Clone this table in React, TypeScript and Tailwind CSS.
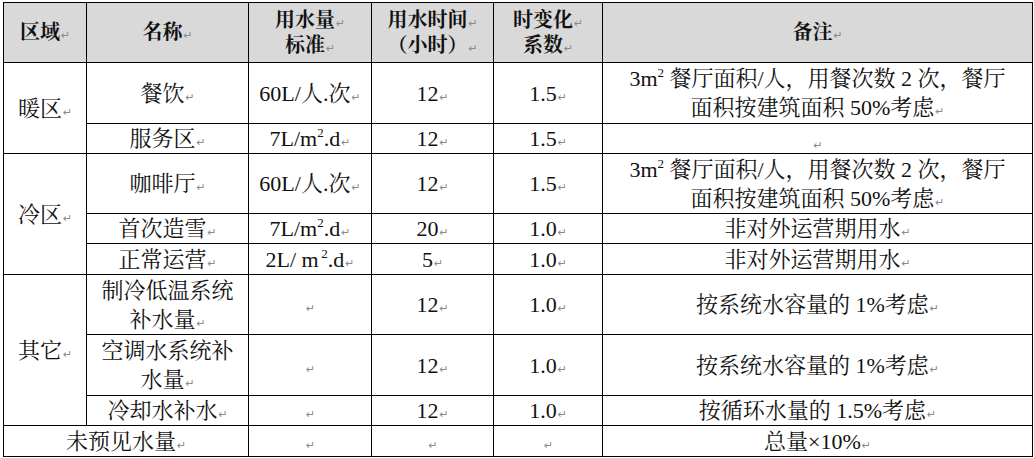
import React from "react";

const M = () => (
  <span className="font-['DejaVu_Sans',sans-serif] text-[11px] leading-none text-[#8a8a8a] font-normal align-baseline ml-[1px]">↵</span>
);

const Sup = ({ children }: { children: React.ReactNode }) => (
  <span className="text-[13px] leading-none relative -top-[9px]">{children}</span>
);

const td = "border border-black text-center align-middle px-[4px] py-0";
const th = "border border-black text-center align-middle px-[4px] py-0 bg-[#d9d9d9] font-bold text-[20px] leading-[25px]";

export default function App() {
  return (
    <div className="w-[1034px] h-[458px] bg-white pl-[3px] pt-[2px] text-[#111] font-['Liberation_Serif','Noto_Serif_CJK_SC','Noto_Sans_CJK_SC',serif] text-[22px] leading-[29px]">
      <table className="table-fixed border-collapse w-[1029px]">
        <colgroup>
          <col className="w-[83px]" />
          <col className="w-[162px]" />
          <col className="w-[123px]" />
          <col className="w-[122px]" />
          <col className="w-[109px]" />
          <col className="w-[430px]" />
        </colgroup>
        <tbody>
          <tr className="h-[60px]">
            <td className={th}>区域<M /></td>
            <td className={th}>名称<M /></td>
            <td className={th}>用水量<M /><br />标准<M /></td>
            <td className={th}>用水时间<M /><br />（小时）<M /></td>
            <td className={th}>时变化<M /><br />系数<M /></td>
            <td className={th}>备注<M /></td>
          </tr>
          <tr className="h-[61px]">
            <td className={td} rowSpan={2}>暖区<M /></td>
            <td className={td}>餐饮<M /></td>
            <td className={td}>60L/人.次<M /></td>
            <td className={td}>12<M /></td>
            <td className={td}>1.5<M /></td>
            <td className={td}>3m<Sup>2</Sup> 餐厅面积/人，用餐次数 2 次，餐厅<br />面积按建筑面积 50%考虑<M /></td>
          </tr>
          <tr className="h-[30px]">
            <td className={td}>服务区<M /></td>
            <td className={td}>7L/m<Sup>2</Sup>.d<M /></td>
            <td className={td}>12<M /></td>
            <td className={td}>1.5<M /></td>
            <td className={td}><span className="relative top-[3px] leading-none"><M /></span></td>
          </tr>
          <tr className="h-[60px]">
            <td className={td} rowSpan={3}>冷区<M /></td>
            <td className={td}>咖啡厅<M /></td>
            <td className={td}>60L/人.次<M /></td>
            <td className={td}>12<M /></td>
            <td className={td}>1.5<M /></td>
            <td className={td}>3m<Sup>2</Sup> 餐厅面积/人，用餐次数 2 次，餐厅<br />面积按建筑面积 50%考虑<M /></td>
          </tr>
          <tr className="h-[30px]">
            <td className={td}>首次造雪<M /></td>
            <td className={td}>7L/m<Sup>2</Sup>.d<M /></td>
            <td className={td}>20<M /></td>
            <td className={td}>1.0<M /></td>
            <td className={td}>非对外运营期用水<M /></td>
          </tr>
          <tr className="h-[31px]">
            <td className={td}>正常运营<M /></td>
            <td className={td}>2L/ m<Sup>&thinsp;2</Sup>.d<M /></td>
            <td className={td}>5<M /></td>
            <td className={td}>1.0<M /></td>
            <td className={td}>非对外运营期用水<M /></td>
          </tr>
          <tr className="h-[60px]">
            <td className={td} rowSpan={3}>其它<M /></td>
            <td className={td}>制冷低温系统<br />补水量<M /></td>
            <td className={td}><M /></td>
            <td className={td}>12<M /></td>
            <td className={td}>1.0<M /></td>
            <td className={td}>按系统水容量的 1%考虑<M /></td>
          </tr>
          <tr className="h-[61px]">
            <td className={td}>空调水系统补<br />水量<M /></td>
            <td className={td}><M /></td>
            <td className={td}>12<M /></td>
            <td className={td}>1.0<M /></td>
            <td className={td}>按系统水容量的 1%考虑<M /></td>
          </tr>
          <tr className="h-[29px]">
            <td className={td}>冷却水补水<M /></td>
            <td className={td}><M /></td>
            <td className={td}>12<M /></td>
            <td className={td}>1.0<M /></td>
            <td className={td}>按循环水量的 1.5%考虑<M /></td>
          </tr>
          <tr className="h-[31px]">
            <td className={td} colSpan={2}>未预见水量<M /></td>
            <td className={td}><M /></td>
            <td className={td}><M /></td>
            <td className={td}><M /></td>
            <td className={td}>总量×10%<M /></td>
          </tr>
        </tbody>
      </table>
    </div>
  );
}
